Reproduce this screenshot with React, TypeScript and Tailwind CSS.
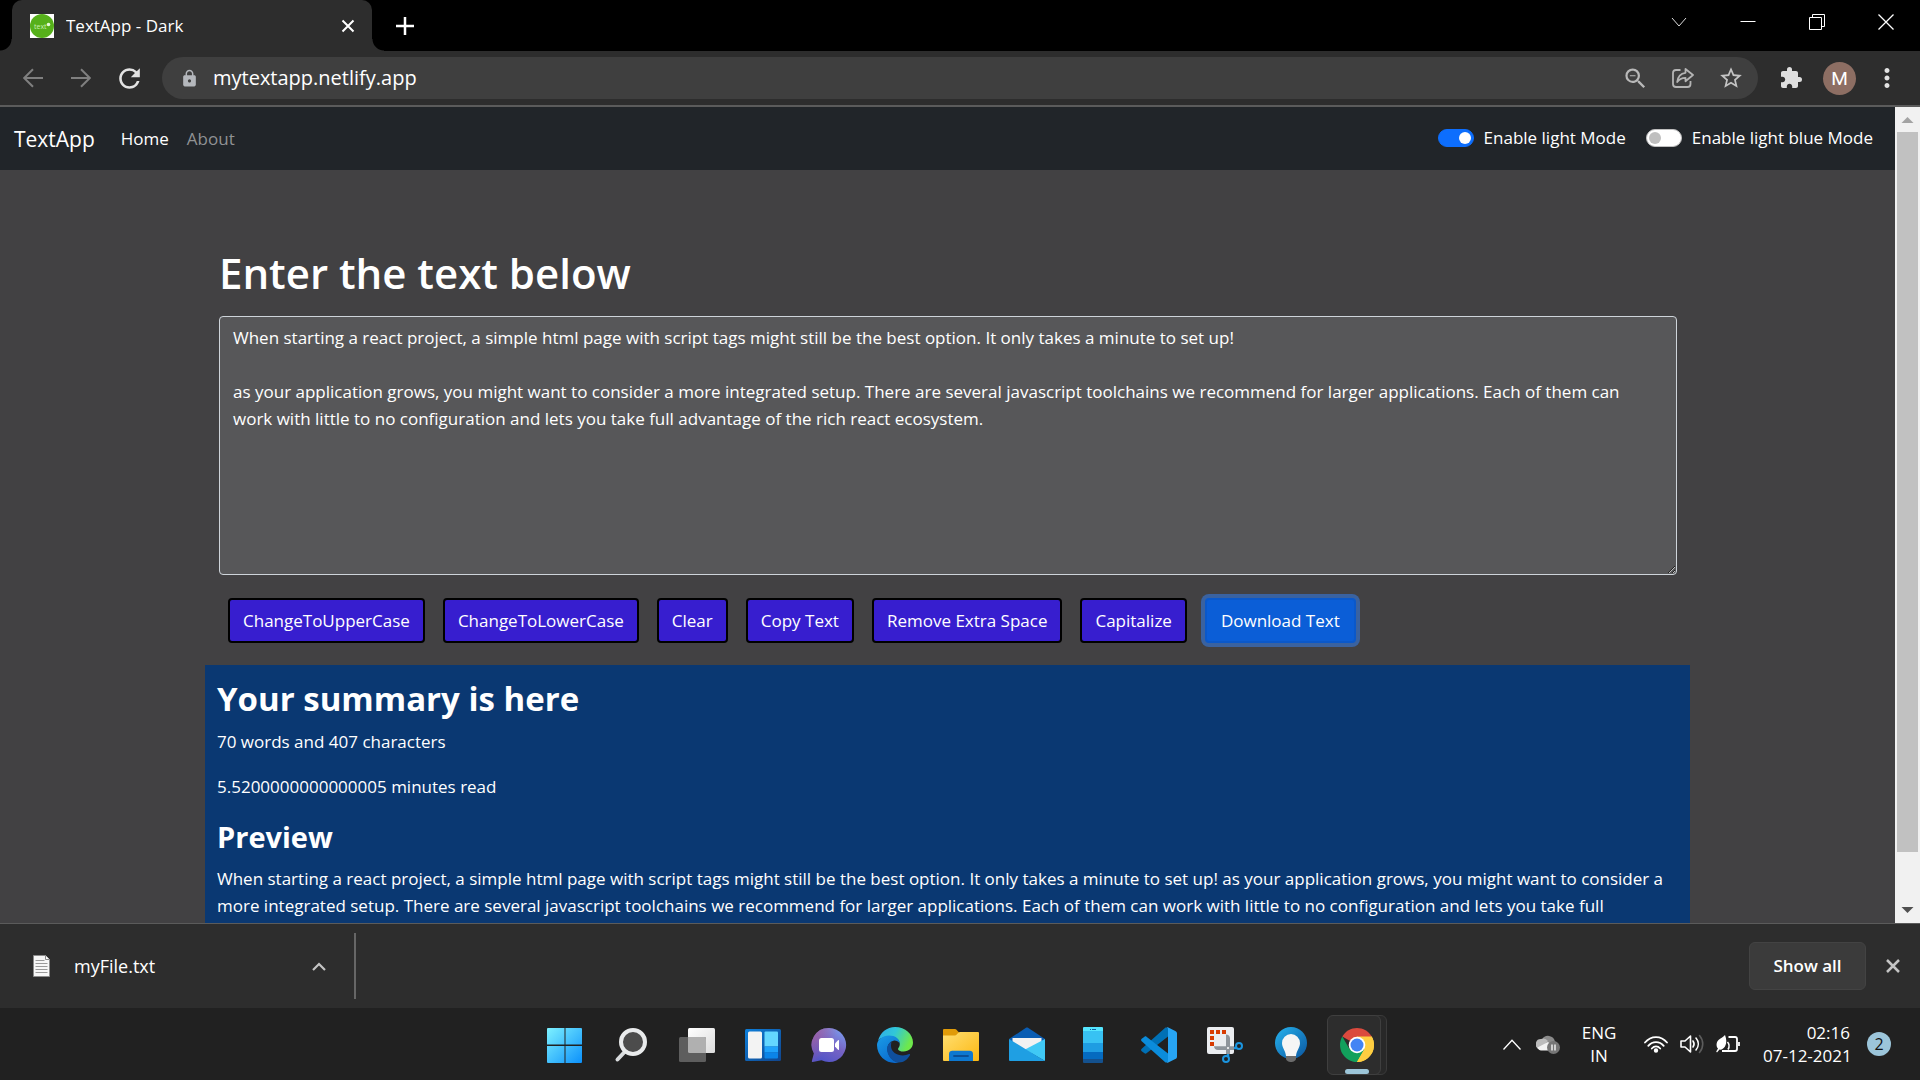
import { useState } from 'react';
import type { ReactNode } from 'react';
import { MdExtension, MdLock, MdMoreVert, MdRefresh, MdStarBorder, MdZoomOut } from 'react-icons/md';

const INITIAL_TEXT =
  'When starting a react project, a simple html page with script tags might still be the best option. It only takes a minute to set up!\n\nas your application grows, you might want to consider a more integrated setup. There are several javascript toolchains we recommend for larger applications. Each of them can work with little to no configuration and lets you take full advantage of the rich react ecosystem.';

/* ---------- Browser chrome ---------- */

function Favicon() {
  return (
    <svg viewBox="0 0 24 24" className="size-6 shrink-0" aria-hidden="true">
      <rect width="24" height="24" fill="#fff" />
      <circle cx="12" cy="12" r="12" fill="#56b01a" />
      <text x="4" y="15" fontSize="7" fontFamily="Open Sans" fill="#c9eeb0">text</text>
      <circle cx="18.500" cy="10.500" r="1.800" fill="#e6f8d8" />
    </svg>
  );
}

function TabStrip() {
  return (
    <div className="flex h-[51px] shrink-0 items-start bg-black pl-3">
      <div className="relative flex h-[51px] w-[360px] items-center rounded-t-[10px] bg-[#2d2d2d] pl-[18px] pr-3">
        <Favicon />
        <span className="ml-3 flex-1 truncate text-[17px] leading-6">TextApp - Dark</span>
        <button aria-label="Close tab" className="flex size-6 items-center justify-center">
          <svg viewBox="0 0 14 14" className="size-[14px]" fill="none" stroke="#fff" strokeWidth="2">
            <path d="M1.500 1.500l11 11M12.500 1.500l-11 11" />
          </svg>
        </button>
        <span className="absolute -left-3 bottom-0 size-3 bg-[radial-gradient(circle_at_0_0,#000_11px,#2d2d2d_12px)]" />
        <span className="absolute -right-3 bottom-0 size-3 bg-[radial-gradient(circle_at_100%_0,#000_11px,#2d2d2d_12px)]" />
      </div>
      <button aria-label="New tab" className="ml-[21px] flex h-[51px] w-6 items-center justify-center">
        <svg viewBox="0 0 18 18" className="size-[18px]" fill="none" stroke="#fff" strokeWidth="2.500">
          <path d="M9 0v18M0 9h18" />
        </svg>
      </button>
      <div className="ml-auto flex h-[43px]">
        <WindowButton label="Search tabs"><path d="M1 4l7 8 7-8" stroke="#ddd" /></WindowButton>
        <WindowButton label="Minimize"><path d="M.5 7.500h15" /></WindowButton>
        <WindowButton label="Restore">
          <path d="M.5 3.500h12v12h-12zM3.500 3.500v-3h12v12h-3" />
        </WindowButton>
        <WindowButton label="Close"><path d="M.5 .5l15 15M15.500 .5l-15 15" strokeWidth="1.300" /></WindowButton>
      </div>
    </div>
  );
}

function WindowButton({ label, children }: { label: string; children: ReactNode }) {
  return (
    <button aria-label={label} className="flex w-[69px] items-center justify-center">
      <svg viewBox="0 0 16 16" className="size-4" fill="none" stroke="#fff" strokeWidth="1">
        {children}
      </svg>
    </button>
  );
}

function ToolButton({ label, children }: { label: string; children: ReactNode }) {
  return (
    <button aria-label={label} className="flex h-[42px] w-12 shrink-0 items-center justify-center">
      {children}
    </button>
  );
}

function Toolbar() {
  return (
    <div className="flex h-14 shrink-0 items-center border-b-2 border-[#5b5b5b] bg-[#2d2d2d] pl-[9px] pr-5">
      <ToolButton label="Back">
        <svg viewBox="0 0 20 20" className="size-5" fill="none" stroke="#7f7f7f" strokeWidth="2">
          <path d="M20 10H1.500M10 1.200L1.200 10l8.800 8.800" />
        </svg>
      </ToolButton>
      <ToolButton label="Forward">
        <svg viewBox="0 0 20 20" className="size-5" fill="none" stroke="#7f7f7f" strokeWidth="2">
          <path d="M0 10h18.500M10 1.200L18.800 10 10 18.800" />
        </svg>
      </ToolButton>
      <ToolButton label="Reload">
        <MdRefresh className="size-[31px] text-[#e3e3e3]" />
      </ToolButton>
      <div className="ml-[9px] flex h-[42px] flex-1 items-center rounded-full bg-[#3f3f3f] pl-[18px] pr-[3px]">
        <MdLock className="size-[19px] shrink-0 text-[#b4b7bc]" />
        <input
          aria-label="Address"
          defaultValue="mytextapp.netlify.app"
          className="ml-[14px] min-w-0 flex-1 bg-transparent text-[20px] leading-7 text-white outline-none"
        />
        <ToolButton label="Zoom">
          <MdZoomOut className="size-[27px] text-[#b9b9b9]" />
        </ToolButton>
        <ToolButton label="Share">
          <svg viewBox="0 0 22 20" className="h-5 w-[22px]" fill="none" stroke="#b4b4b4" strokeWidth="1.800" strokeLinejoin="round">
            <path d="M8.500 2H4a3 3 0 0 0-3 3v11a3 3 0 0 0 3 3h11.500a3 3 0 0 0 3-3v-3" />
            <path d="M13.500 1l7.500 6-7.500 6.200V9.800C9.500 9.800 7 11.200 5.200 14c.5-4.500 3-8.500 8.300-9.200z" />
          </svg>
        </ToolButton>
        <ToolButton label="Bookmark this page">
          <MdStarBorder className="size-[26px] text-[#c4c4c4]" />
        </ToolButton>
      </div>
      <button aria-label="Extensions" className="ml-[21px] flex size-6 items-center justify-center">
        <MdExtension className="size-6 text-[#dedede]" />
      </button>
      <button
        aria-label="Profile"
        className="ml-5 flex size-[33px] items-center justify-center rounded-full bg-[#8d6e63] font-[Roboto] text-[19px] leading-none"
      >
        M
      </button>
      <button aria-label="Menu" className="ml-[18px] flex h-[42px] w-[26px] items-center justify-center">
        <MdMoreVert className="size-[30px] shrink-0 text-[#e3e3e3]" />
      </button>
    </div>
  );
}

/* ---------- Web page ---------- */

function Switch({ id, label, checked, onChange }: { id: string; label: string; checked: boolean; onChange: () => void }) {
  return (
    <div className="flex items-center gap-[10px]">
      <input
        id={id}
        type="checkbox"
        role="switch"
        checked={checked}
        onChange={onChange}
        className="flex h-[18px] w-9 appearance-none items-center rounded-full border border-[#bfbfbf] bg-white px-[2px] before:block before:size-3 before:rounded-full before:bg-[#bfbfbf] before:content-[''] checked:justify-end checked:border-[#0d6efd] checked:bg-[#0d6efd] checked:before:bg-white"
      />
      <label htmlFor={id} className="text-[17px] leading-[27px]">{label}</label>
    </div>
  );
}

function Navbar() {
  const [light, setLight] = useState(true);
  const [blue, setBlue] = useState(false);
  return (
    <nav className="flex h-[63px] items-center bg-[#212529] pl-[14px] pr-[22px]">
      <a href="#" className="text-[21px] leading-8">TextApp</a>
      <a href="#" className="ml-[26px] text-[17px] leading-[27px]">Home</a>
      <a href="#about" className="ml-[18px] text-[17px] leading-[27px] text-[#909294]">About</a>
      <div className="ml-auto flex gap-5 pb-[2px]">
        <Switch id="light" label="Enable light Mode" checked={light} onChange={() => setLight(!light)} />
        <Switch id="blue" label="Enable light blue Mode" checked={blue} onChange={() => setBlue(!blue)} />
      </div>
    </nav>
  );
}

const ACTIONS = ['ChangeToUpperCase', 'ChangeToLowerCase', 'Clear', 'Copy Text', 'Remove Extra Space', 'Capitalize'];

function WebPage() {
  const [text, setText] = useState(INITIAL_TEXT);
  return (
    <div className="h-full flex-1 overflow-hidden bg-[#424143]">
      <Navbar />
      <main className="mx-auto max-w-[1485px]">
        <section className="pl-[14px] pr-[13px] pt-[76px]">
          <h1 className="text-[42px] font-semibold leading-[54px]">
            <label htmlFor="box">Enter the text below</label>
          </h1>
          <textarea
            id="box"
            spellCheck={false}
            value={text}
            onChange={(e) => setText(e.target.value)}
            className="mt-4 block h-[259px] w-full rounded-[4px] border border-[#ced4da] bg-[#575759] py-[7px] pl-[13px] pr-5 text-[17px] leading-[27px] text-white outline-none"
          />
          <div className="mt-[23px] flex flex-wrap gap-[18px] px-[9px]">
            {ACTIONS.map((a) => (
              <button
                key={a}
                className="h-[45px] rounded-[4px] border-2 border-black bg-[#371ecf] px-[13px] text-[17px] leading-[27px]"
              >
                {a}
              </button>
            ))}
            <button className="h-[45px] rounded-[4px] border-2 border-[#0a58ca] bg-[#0b5ed7] px-[14px] text-[17px] leading-[27px] ring-4 ring-[#3184fd]/50">
              Download Text
            </button>
          </div>
        </section>
        <section className="mt-[22px] bg-[#0a3872] pb-8 pl-3 pr-1 pt-3">
          <h2 className="text-[33px] font-bold leading-[43px]">Your summary is here</h2>
          <p className="mt-2 text-[17px] leading-[27px]">70 words and 407 characters</p>
          <p className="mt-[18px] text-[17px] leading-[27px]">5.5200000000000005 minutes read</p>
          <h3 className="mt-[18px] text-[29px] font-bold leading-[38px]">Preview</h3>
          <p className="mt-[9px] text-[17px] leading-[27px]">{text}</p>
        </section>
      </main>
    </div>
  );
}

function ScrollBar() {
  return (
    <div className="flex h-full w-[25px] shrink-0 flex-col items-center bg-[#f1f1f1]">
      <svg viewBox="0 0 25 25" className="size-[25px] shrink-0" aria-hidden="true">
        <path d="M12.500 10l6 6h-12z" fill="#a3a3a3" />
      </svg>
      <div className="w-[21px] flex-[720] bg-[#c1c1c1]" />
      <div className="flex-[46]" />
      <svg viewBox="0 0 25 25" className="size-[25px] shrink-0" aria-hidden="true">
        <path d="M12.500 15l6-6h-12z" fill="#505050" />
      </svg>
    </div>
  );
}

/* ---------- Downloads ---------- */

function DownloadBar() {
  return (
    <div className="flex h-[85px] shrink-0 items-center border-t border-[#5b5b5b] bg-[#2d2d2d] pl-[33px] pr-[15px]">
      <svg viewBox="0 0 17 22" className="h-[22px] w-[17px] shrink-0" aria-hidden="true">
        <path d="M.5 .5h12l4 4v17H.5z" fill="#f7f7f7" stroke="#8b8b8b" />
        <path d="M12.500 .5v4h4" fill="#fff" stroke="#8b8b8b" />
        <path d="M2.500 5.500h9M2.500 8.500h12M2.500 11.500h12M2.500 14.500h12M2.500 17.500h12" stroke="#9a9a9a" />
      </svg>
      <span className="ml-6 w-[230px] text-[18px] leading-6">myFile.txt</span>
      <button aria-label="Download options" className="flex size-[30px] items-center justify-center">
        <svg viewBox="0 0 14 9" className="h-[9px] w-[14px]" fill="none" stroke="#c4c4c4" strokeWidth="2.200">
          <path d="M1 8l6-6 6 6" />
        </svg>
      </button>
      <div className="ml-5 h-[66px] w-[2px] bg-[#666]" />
      <button className="ml-auto h-12 w-[117px] rounded-[6px] border border-[#434343] bg-[#3b3b3b] text-[17px] font-semibold leading-6">
        Show all
      </button>
      <button aria-label="Close downloads bar" className="ml-[15px] flex size-6 items-center justify-center">
        <svg viewBox="0 0 14 14" className="size-[14px]" fill="none" stroke="#c4c4c4" strokeWidth="2.500">
          <path d="M1 1l12 12M13 1L1 13" />
        </svg>
      </button>
    </div>
  );
}

/* ---------- Taskbar ---------- */

const APPS: { name: string; icon: ReactNode }[] = [
  {
    name: 'Start',
    icon: (
      <>
        <linearGradient id="win" x1="0" y1="0" x2="35" y2="35" gradientUnits="userSpaceOnUse">
          <stop offset="0" stopColor="#7ff3ff" />
          <stop offset="1" stopColor="#0d92fb" />
        </linearGradient>
        <path d="M1 1h16.500v16.500H0V2a1 1 0 0 1 1-1zM18.500 1H34a1 1 0 0 1 1 1v15.500H18.500zM0 19h17.500v17H1a1 1 0 0 1-1-1zM18.500 19H35v16a1 1 0 0 1-1 1H18.500z" fill="url(#win)" />
      </>
    ),
  },
  {
    name: 'Search',
    icon: (
      <>
        <path d="M12 24.500L4.500 32.500" stroke="#d9dcde" strokeWidth="4" strokeLinecap="round" />
        <circle cx="20" cy="15" r="12" fill="#4c4c4c" stroke="#e9ebec" strokeWidth="4" />
      </>
    ),
  },
  {
    name: 'Task view',
    icon: (
      <>
        <linearGradient id="tv" x1="0" y1="0" x2="1" y2="1">
          <stop offset="0" stopColor="#fff" />
          <stop offset="1" stopColor="#dcdcdc" />
        </linearGradient>
        <rect x="9" y="1" width="27" height="25" rx="1.500" fill="url(#tv)" />
        <rect x="0" y="10" width="27" height="25" rx="1.500" fill="#5e5e5e" />
        <path d="M9 10h16.500a1.500 1.500 0 0 1 1.500 1.500V26H10.500A1.500 1.500 0 0 1 9 24.500z" fill="#b0b0b0" />
      </>
    ),
  },
  {
    name: 'Widgets',
    icon: (
      <>
        <linearGradient id="wd" x1="0" y1="0" x2="1" y2="1">
          <stop offset="0" stopColor="#0d7fdb" />
          <stop offset="1" stopColor="#11458c" />
        </linearGradient>
        <rect x="0" y="2" width="36" height="32" rx="1.500" fill="url(#wd)" />
        <rect x="3" y="4.500" width="14" height="27" rx="1.500" fill="#f3f3f3" />
        <path d="M20.500 4.500h11.500a1 1 0 0 1 1 1V19.500H19.500V5.500a1 1 0 0 1 1-1z" fill="#64d6ff" />
        <path d="M19.500 19.500H33v6H19.500z" fill="#1fa2fb" />
        <path d="M19.500 25.500H33v5a1 1 0 0 1-1 1H20.500a1 1 0 0 1-1-1z" fill="#0b84e8" />
      </>
    ),
  },
  {
    name: 'Chat',
    icon: (
      <>
        <linearGradient id="ch" x1="0.900" y1="0" x2="0.300" y2="1">
          <stop offset="0" stopColor="#7aa2f2" />
          <stop offset="0.500" stopColor="#7864c4" />
          <stop offset="1" stopColor="#5054c8" />
        </linearGradient>
        <linearGradient id="ch2" x1="0" y1="0" x2="0.600" y2="0.400">
          <stop offset="0" stopColor="#a65f9b" stopOpacity="0.900" />
          <stop offset="1" stopColor="#a65f9b" stopOpacity="0" />
        </linearGradient>
        <path d="M18 1a17 17 0 1 1-7.500 32.200L1.500 35c-.6 0-.8-.5-.6-1l2-7.500A17 17 0 0 1 18 1z" fill="url(#ch)" />
        <path d="M18 1a17 17 0 1 1-7.500 32.200L1.500 35c-.6 0-.8-.5-.6-1l2-7.500A17 17 0 0 1 18 1z" fill="url(#ch2)" />
        <rect x="8" y="11" width="15" height="14" rx="2.500" fill="#fff" />
        <path d="M24 16.500l3-3.200c.6-.5 1-.3 1 .4v8.600c0 .7-.4.900-1 .4l-3-3.200z" fill="#fff" />
      </>
    ),
  },
  {
    name: 'Microsoft Edge',
    icon: (
      <>
        <linearGradient id="e1" x1="0" y1="0" x2="1" y2="0.350">
          <stop offset="0" stopColor="#2fa9ea" />
          <stop offset="0.500" stopColor="#31c7d8" />
          <stop offset="1" stopColor="#6ee84c" />
        </linearGradient>
        <linearGradient id="e2" x1="0" y1="0" x2="0.600" y2="1">
          <stop offset="0" stopColor="#1a9ce6" />
          <stop offset="1" stopColor="#0a6cd0" />
        </linearGradient>
        <path d="M1 14C3 5.500 10 0 18 0c10.500 0 18 7.500 18 15.500 0 5.500-4.200 9-9.300 9-3.500 0-5.700-1.300-5.700-2.600 0-1 1.800-2 1.800-5 0-4-4-7.400-10-7.400C7.500 9.500 3 11 1 14z" fill="url(#e1)" />
        <path d="M0 18c0-5 5.500-9.500 12-9.500 6.500 0 10.500 3.500 10.800 8-1.500-2.200-4-3.200-6.300-2.800-4 .8-6 4.300-6 8C10.500 29 16 34.500 22 35.500 11 38 0 30 0 18z" fill="url(#e2)" />
        <path d="M14.500 14.500c-3 1.500-4.500 4.500-4.500 7.500 0 7 6 13.500 12 13.500 5 0 9-3.500 11-7.500.3-.7-.2-1.200-.9-.9C24.500 30.500 14 27 14 19c0-1.600.2-3.200.5-4.500z" fill="#0f4f9c" />
      </>
    ),
  },
  {
    name: 'File Explorer',
    icon: (
      <>
        <linearGradient id="fe" x1="0" y1="0" x2="1" y2="1">
          <stop offset="0" stopColor="#ffdf72" />
          <stop offset="1" stopColor="#fcb812" />
        </linearGradient>
        <path d="M0 3a1 1 0 0 1 1-1h10.500c1 0 1.500.3 2 .8L16.500 6V12H0z" fill="#e09b09" />
        <path d="M0 8.500h11.500c1 0 1.500-.3 2-.8l1.800-1.900c.4-.5 1-.8 2-.8H35a1 1 0 0 1 1 1v27a1 1 0 0 1-1 1H1a1 1 0 0 1-1-1z" fill="url(#fe)" />
        <path d="M6 34v-7c0-2 1.500-3.200 3.200-3.200h17.600C28.500 23.800 30 25 30 27v7z" fill="#0d78d0" />
        <path d="M11 29h14" stroke="#0a4f96" strokeWidth="1.800" strokeLinecap="round" />
      </>
    ),
  },
  {
    name: 'Mail',
    icon: (
      <>
        <path d="M0 12L17 .8c.7-.4 1.300-.4 2 0L36 12l-5 6H5z" fill="#0a5db3" />
        <path d="M3.500 11h29v8L18 28 3.500 19z" fill="#f2f2f2" />
        <path d="M36 12v22L16 22.500z" fill="#40c9f5" />
        <path d="M0 12l36 22H1a1 1 0 0 1-1-1z" fill="#1f9fe3" />
      </>
    ),
  },
  {
    name: 'Your Phone',
    icon: (
      <>
        <path d="M8 4h20v12H8z" fill="#38c2f3" />
        <path d="M8 4V1a1 1 0 0 1 1-1h18a1 1 0 0 1 1 1v3z" fill="#55e6ff" />
        <path d="M8 16h20v9H8z" fill="#1f9de2" />
        <path d="M8 25h20v7H8z" fill="#056bc0" />
        <path d="M8 32h20v3a1 1 0 0 1-1 1H9a1 1 0 0 1-1-1z" fill="#14518e" />
        <path d="M15 2.500h1M17 2.500h4" stroke="#0a5f9e" strokeWidth="1" />
      </>
    ),
  },
  {
    name: 'Visual Studio Code',
    icon: (
      <>
        <path d="M27 9.500L5.500 26.300c-.6.500-1.400.5-2 0L.7 24.200c-.8-.7-.8-1.800 0-2.500L24.500 .6 27 1z" fill="#0070b5" />
        <path d="M27 26.500L5.500 9.700c-.6-.5-1.400-.5-2 0L.7 11.800c-.8.7-.8 1.800 0 2.500l23.800 21.100 2.500-.4z" fill="#0b8cdb" />
        <path d="M24.500 35.400c.6.500 1.500.7 2.300.3l7.500-3.600c1-.5 1.700-1.300 1.700-2.400V6.300c0-1.100-.7-1.900-1.700-2.400L26.800 .3c-.8-.4-1.700-.2-2.300.3 .9-.7 2.500 0 2.500 1.300v32.200c0 1.300-1.600 2-2.500 1.300z" fill="#27a5f5" />
      </>
    ),
  },
  {
    name: 'Snipping Tool',
    icon: (
      <>
        <rect x="0" y="0" width="27" height="27" rx="2" fill="#ebedf0" />
        <path d="M3 3h4v4H3zM9 3h4v4H9zM15 3h4v4h-4zM3 9h4v4H3zM3 15h4v4H3z" fill="#d83b01" />
        <path d="M19 7.500c2.200 0 4 1.500 4 3.800V27h-4zM7 19.200h20v3.800H11c-2.200 0-4-1.500-4-3.800z" fill="#8f959b" />
        <circle cx="21" cy="21" r="1" fill="#fff" />
        <circle cx="32" cy="19" r="3" fill="none" stroke="#1b95e0" strokeWidth="2" />
        <circle cx="19" cy="32" r="3" fill="none" stroke="#1b95e0" strokeWidth="2" />
        <path d="M27 21h2.500M21 27v2.500" stroke="#1b95e0" strokeWidth="2.500" />
      </>
    ),
  },
  {
    name: 'Tips',
    icon: (
      <>
        <linearGradient id="tp" x1="0" y1="0" x2="1" y2="1">
          <stop offset="0" stopColor="#26b3ee" />
          <stop offset="1" stopColor="#0b559f" />
        </linearGradient>
        <circle cx="18" cy="16" r="16" fill="url(#tp)" />
        <path d="M18 7a9 9 0 0 1 9 9c0 5-3.500 7.500-4 13h-10c-.5-5.500-4-8-4-13a9 9 0 0 1 9-9z" fill="#f5f5f5" />
        <path d="M13 29h10v2.500c0 2-2.500 3.500-5 3.500s-5-1.500-5-3.500z" fill="#6b6b6b" />
      </>
    ),
  },
];

function TaskIcon({ name, children }: { name: string; children: ReactNode }) {
  return (
    <button aria-label={name} className="flex h-[60px] w-[66px] items-center justify-center">
      <svg viewBox="0 0 36 36" className="size-9">{children}</svg>
    </button>
  );
}

function ChromeTask() {
  return (
    <button aria-label="Google Chrome" className="flex w-[66px] pl-[3px]">
      <span className="relative z-10 flex h-[60px] w-[54px] items-center justify-center rounded-[6px] border border-[#3f3f3f] bg-[#2d2d2d]">
        <svg viewBox="0 0 34 34" className="ml-[6px] size-[34px]">
          <path d="M17 17L2.300 8.500A17 17 0 0 1 31.700 8.500z" fill="#db4a3e" />
          <path d="M17 17V8.500h14.700A17 17 0 0 1 17 34z" fill="#ffce41" />
          <path d="M17 34A17 17 0 0 1 2.300 8.500L9.600 21.200 17 17l7.400 4.200z" fill="#12a05c" />
          <path d="M17 34l7.400-12.800L17 17l14.700-8.500A17 17 0 0 1 17 34z" fill="#ffce41" />
          <circle cx="17" cy="17" r="8.300" fill="#fff" />
          <circle cx="17" cy="17" r="6.500" fill="#4384f4" />
        </svg>
        <span className="absolute bottom-0 left-[17px] h-[5px] w-6 rounded-full bg-[#9cc5d8]" />
      </span>
      <span className="-ml-[6px] h-[60px] w-3 rounded-r-[6px] border border-[#3a3a3a] bg-[#282828]" />
    </button>
  );
}

function Tray() {
  return (
    <div className="flex items-center justify-end pr-[29px]">
      <button aria-label="Show hidden icons" className="flex h-10 w-[18px] items-center">
        <svg viewBox="0 0 18 11" className="h-[11px] w-[18px]" fill="none" stroke="#fff" strokeWidth="1.300">
          <path d="M.5 10.500L9 1.200l8.500 9.300" />
        </svg>
      </button>
      <button aria-label="OneDrive" className="ml-[15px]">
        <svg viewBox="0 0 24 20" className="h-5 w-6">
          <path d="M6 5.500a7 7 0 0 1 13 2A4 4 0 0 1 19 15H10z" fill="#8b8b8b" />
          <path d="M5 5a6 6 0 0 1 7 2l-8 8.500A5.300 5.300 0 0 1 5 5z" fill="#bcbcbc" />
          <path d="M1.500 13.500L12 8l5 4-5 4.500H5c-1.500 0-2.800-1-3.500-3z" fill="#f2f2f2" />
          <circle cx="17.500" cy="13.500" r="6.500" fill="#767676" />
          <path d="M16 10.500v6M19 10.500v6" stroke="#fff" strokeWidth="1.300" />
        </svg>
      </button>
      <button aria-label="Input language" className="ml-[21px] w-9 text-center text-[17px] leading-[23px]">
        ENG
        <br />
        IN
      </button>
      <button aria-label="Network, volume and battery" className="ml-[27px] flex items-center gap-3">
        <svg viewBox="0 0 24 18" className="h-[18px] w-6" fill="none" stroke="#fff" strokeWidth="1.800" strokeLinecap="round">
          <path d="M1 7.500c6-7.300 16-7.300 22 0M4.300 10.800c4.200-5 11.200-5 15.400 0M7.800 13.500c2.500-2.800 5.900-2.800 8.400 0" />
          <circle cx="12" cy="15.500" r="1.300" fill="#fff" />
        </svg>
        <svg viewBox="0 0 24 20" className="h-5 w-6" fill="none" stroke="#fff" strokeWidth="1.600" strokeLinecap="round" strokeLinejoin="round">
          <path d="M1 7h4l5.500-5v16L5 13H1z" />
          <path d="M13 7c1.300 1.800 1.300 4.200 0 6M16 4c3 3.600 3 8.400 0 12" />
          <path d="M19.500 1.500c4.300 5 4.300 12 0 17" stroke="#5c5c5c" />
        </svg>
        <svg viewBox="0 0 24 18" className="h-[18px] w-6" fill="none" stroke="#fff" strokeWidth="1.800">
          <path d="M12.500 2H19a2 2 0 0 1 2 2v10a2 2 0 0 1-2 2H6M23 7v4" />
          <path d="M9 0C10.500 4 11 8 9 11.500 7.500 14 5 15 3.500 14.500L1 17.500l-.8-1L2 13.500C0 11.500 0 7.500 2.500 5 4.500 3 7 2.500 9 0z" fill="#fff" stroke="none" />
          <path d="M11.500 7c1.800 2 2 5 .5 7.500" strokeWidth="1.500" />
        </svg>
      </button>
      <div className="ml-[23px] w-[87px] whitespace-nowrap text-right text-[17px] leading-[23px]">
        <p>02:16</p>
        <p>07-12-2021</p>
      </div>
      <button
        aria-label="Notifications"
        className="ml-[17px] flex size-6 items-center justify-center rounded-full bg-[#9cc5da] text-[16px] leading-none text-[#111]"
      >
        2
      </button>
    </div>
  );
}

function Taskbar() {
  return (
    <div className="grid h-[72px] shrink-0 grid-cols-[1fr_auto_1fr] items-center bg-[#212121]">
      <span />
      <div className="flex items-center pl-[2px] pt-[2px]">
        {APPS.map((a) => (
          <TaskIcon key={a.name} name={a.name}>{a.icon}</TaskIcon>
        ))}
        <ChromeTask />
      </div>
      <Tray />
    </div>
  );
}

export default function App() {
  return (
    <div className="flex h-screen flex-col overflow-hidden bg-black font-['Open_Sans',sans-serif] text-white">
      <TabStrip />
      <Toolbar />
      <div className="flex min-h-0 flex-1">
        <WebPage />
        <ScrollBar />
      </div>
      <DownloadBar />
      <Taskbar />
    </div>
  );
}
